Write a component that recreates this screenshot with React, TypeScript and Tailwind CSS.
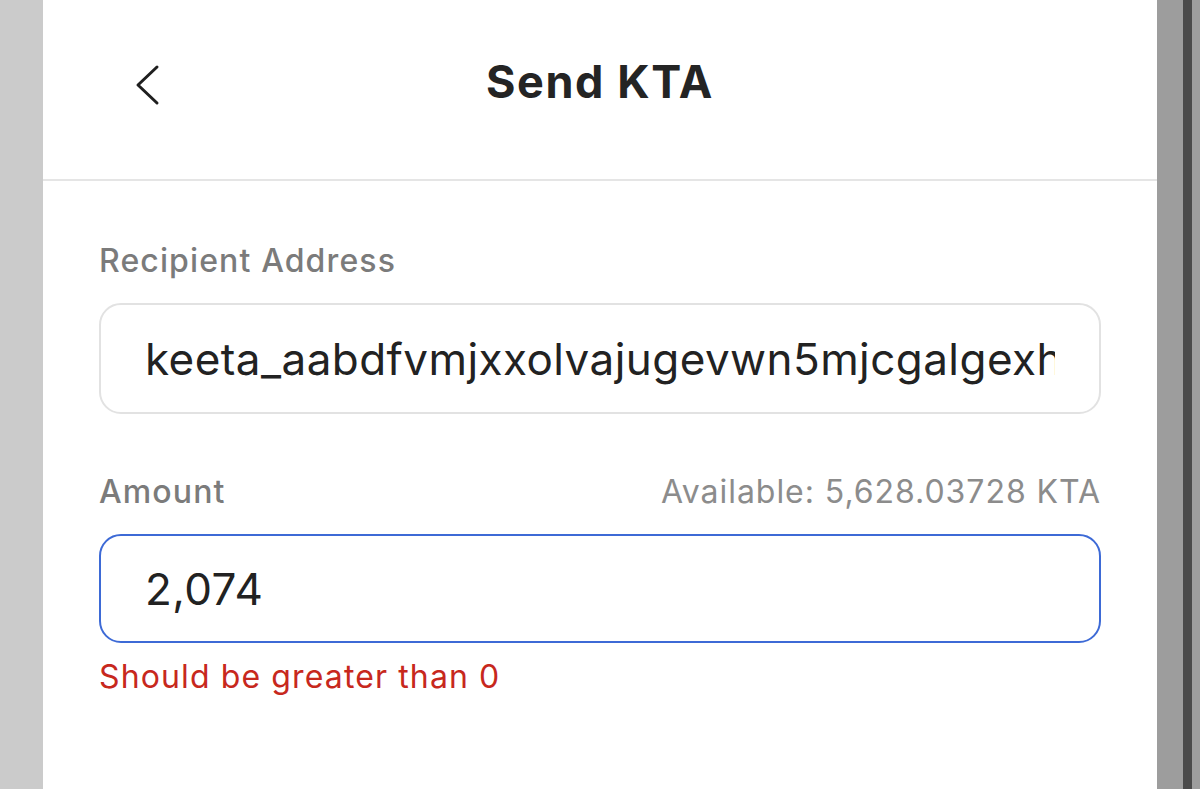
import React from "react";

function BackIcon() {
  return (
    <svg width="26" height="42" viewBox="0 0 26 42" fill="none">
      <polyline
        points="22,3 3,21 22,39"
        stroke="#1f1f1f"
        strokeWidth="3"
        strokeLinecap="round"
        strokeLinejoin="round"
      />
    </svg>
  );
}

export default function App() {
  return (
    <div
      className="flex h-[789px] w-[1200px] overflow-hidden bg-white"
      style={{ fontFamily: "Inter, 'Noto Sans', sans-serif" }}
    >
      <div className="w-[43px] shrink-0 bg-[#cbcbcb]" />

      <main className="flex min-w-0 flex-1 flex-col bg-white">
        <header className="relative flex h-[181px] shrink-0 items-center justify-center border-b-2 border-[#e5e5e5] pb-[16px]">
          <button className="absolute left-[92px] top-[64px]">
            <BackIcon />
          </button>
          <h1 className="text-[45px] font-bold tracking-[0.035em] text-[#242424]">Send KTA</h1>
        </header>

        <div className="flex flex-col px-[56px] pt-[56px]">
          <label className="text-[32px] font-medium tracking-[0.035em] text-[#7b7b7b]">
            Recipient Address
          </label>
          <div className="mt-[18px] flex h-[111px] items-center rounded-[22px] border-2 border-[#e2e2e2] px-[44px]">
            <div className="min-w-0 flex-1 overflow-hidden">
              <span className="whitespace-nowrap text-[44px] tracking-[0.01em] text-[#222222]">
                keeta_aabdfvmjxxolvajugevwn5mjcgalgexhtnmkm
              </span>
            </div>
          </div>

          <div className="mt-[54px] flex items-baseline justify-between">
            <label className="text-[32px] font-medium tracking-[0.035em] text-[#7b7b7b]">Amount</label>
            <span className="text-[32px] tracking-[0.03em] text-[#8c8c8c]">Available: 5,628.03728 KTA</span>
          </div>
          <div className="mt-[18px] flex h-[109px] items-center rounded-[22px] border-2 border-[#3d6ad6] pl-[44px]">
            <span className="text-[44px] tracking-[0.01em] text-[#222222]">2,074</span>
          </div>
          <p className="mt-[10px] text-[32px] tracking-[0.035em] text-[#c7281d]">Should be greater than 0</p>
        </div>
      </main>

      <div className="w-[26px] shrink-0 bg-[#9d9d9d]" />
      <div className="w-[9px] shrink-0 bg-[#4a4a4a]" />
      <div className="w-[8px] shrink-0 bg-[#9d9d9d]" />
    </div>
  );
}
